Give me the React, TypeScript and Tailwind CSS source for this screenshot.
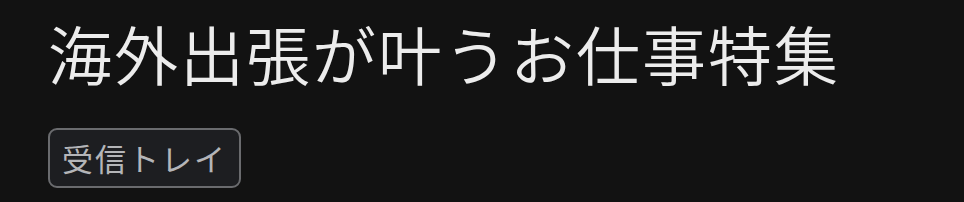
import React from "react";

const App = () => {
  return (
    <div
      className="w-[964px] h-[202px] bg-[#121212] px-[48px] pt-[12px]"
      style={{ fontFamily: '"Noto Sans CJK JP", "Noto Sans", sans-serif' }}
    >
      <h1 className="text-[64px] leading-[80px] font-[350] text-[#ececec] tracking-[2px]">
        海外出張が叶うお仕事特集
      </h1>
      <div className="mt-[36px] flex">
        <span className="inline-flex items-center h-[60px] pl-[12px] pr-[12px] rounded-[9px] border-2 border-[#6a6b6e] bg-[#1d1e21] text-[31px] tracking-[2px] text-[#b4b5b8]">
          受信トレイ
        </span>
      </div>
    </div>
  );
};

export default App;
